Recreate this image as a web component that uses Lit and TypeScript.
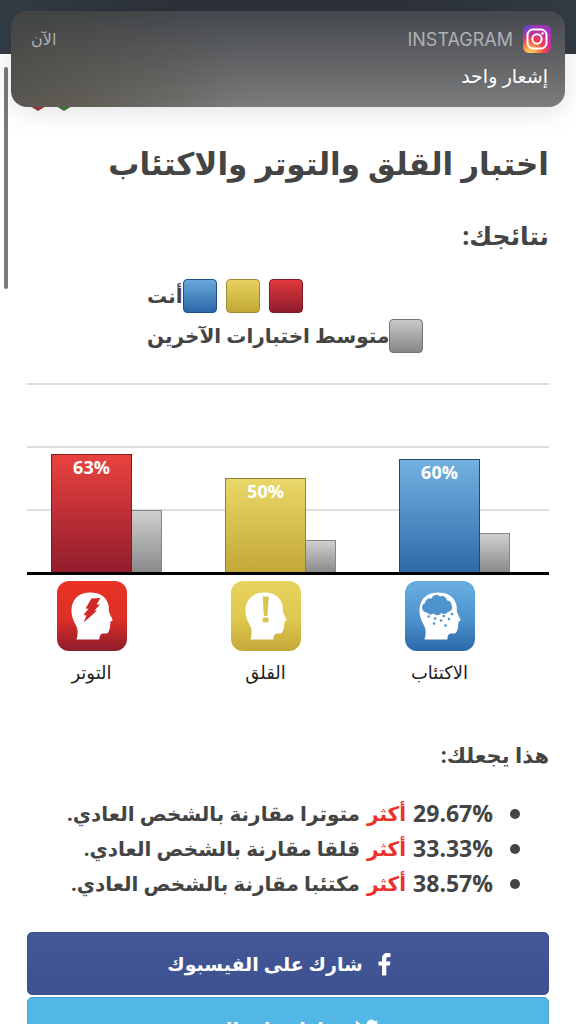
import { LitElement, html, css, svg } from "lit";
import { customElement, property } from "lit/decorators.js";
import { classMap } from "lit/directives/class-map.js";

type Tone = "red" | "yellow" | "blue";

interface Score {
  tone: Tone;
  label: string;
  value: number;
  average: number;
}

interface Finding {
  percent: string;
  text: string;
}

const SCORES: Score[] = [
  { tone: "red", label: "التوتر", value: 63, average: 33 },
  { tone: "yellow", label: "القلق", value: 50, average: 17 },
  { tone: "blue", label: "الاكتئاب", value: 60, average: 21 },
];

const FINDINGS: Finding[] = [
  { percent: "29.67%", text: "متوترا مقارنة بالشخص العادي." },
  { percent: "33.33%", text: "قلقا مقارنة بالشخص العادي." },
  { percent: "38.57%", text: "مكتئبا مقارنة بالشخص العادي." },
];

@customElement("head-icon")
class HeadIcon extends LitElement {
  @property() tone: Tone = "red";

  static styles = css`
    :host {
      display: block;
    }
    .tile {
      display: block;
      width: 70px;
      height: 70px;
    }
  `;

  private symbol() {
    if (this.tone === "red") {
      return svg`<path fill="#d02a28" d="M34.500 17.500L43.500 17L39.500 23.500L43 23.500L37.500 29.500L40 29.500L33 36L26.500 41.500L29.500 34.500L26.500 34L31.500 27.800L28.500 27.500Z"/>`;
    }
    if (this.tone === "yellow") {
      return svg`<g fill="#dcc44c"><path d="M31.700 15.500h6l-1.200 19.500h-3.600z"/><rect x="31.700" y="36.500" width="5.800" height="4.800" rx="1"/></g>`;
    }
    return svg`<g fill="#4f93cd">
      <path d="M22 31.500a5 5 0 0 1-2-9.500a5 5 0 0 1 6.500-4.500a5 5 0 0 1 8.500-2a5 5 0 0 1 7 4a4.500 4.500 0 0 1 4.500 4.500a4.500 4.500 0 0 1-3.500 7a5 5 0 0 1-6.500 1a5 5 0 0 1-8 .5a5 5 0 0 1-6.500-1z"/>
      <circle cx="23.700" cy="35.500" r="1.300"/><circle cx="30" cy="37.500" r="1.300"/><circle cx="38.700" cy="35" r="1.300"/>
      <circle cx="47" cy="33" r="1.300"/><circle cx="36" cy="39.500" r="1.300"/><circle cx="44" cy="38" r="1.300"/>
      <circle cx="29" cy="42.500" r="1.300"/><circle cx="40.500" cy="44.500" r="1.300"/>
    </g>`;
  }

  render() {
    const stops = {
      red: ["#e83225", "#dd2f27", "#8c1c2c"],
      yellow: ["#e8d35c", "#dec74f", "#c3a838"],
      blue: ["#6aaee0", "#4d92cd", "#2c68a8"],
    }[this.tone];
    return html`<svg class="tile" viewBox="0 0 70 70" aria-hidden="true">
      <defs>
        <linearGradient id="g" x1="0" y1="0" x2="0" y2="1">
          <stop offset="0" stop-color=${stops[0]} />
          <stop offset="0.55" stop-color=${stops[1]} />
          <stop offset="1" stop-color=${stops[2]} />
        </linearGradient>
      </defs>
      <rect width="70" height="70" rx="12" fill="url(#g)" />
      <path
        fill="#fff"
        d="M19.500 58.500C21.300 52 21 48 18.500 43.500C15.500 38 14 33 14.500 27.500C15.500 17 23 11.500 33 11.500C43 11.500 49.500 16 51.500 24C52 27 51.500 29 52 31C53 34 54.500 36 55.500 38.500C55.800 39.800 54.500 40.200 53.300 40.700C53.300 42 53.800 43 53 44.500C53.300 46.500 52.800 47.500 52 49.500C51.300 52.800 49.500 52.500 47 52.500C44 52.300 42.800 53.500 42.300 58.500Z"
      />
      ${this.symbol()}
    </svg>`;
  }
}

@customElement("push-banner")
class PushBanner extends LitElement {
  static styles = css`
    :host {
      display: block;
      box-sizing: border-box;
      height: 96px;
      padding: 12px 14px 0 20px;
      border-radius: 16px;
      color: #fff;
      font-family: Inter, "DejaVu Sans", sans-serif;
      font-weight: 400;
      background:
        radial-gradient(ellipse 200px 90px at 60px 100%, rgba(92, 80, 58, 0.3), transparent),
        linear-gradient(90deg, rgba(62, 64, 60, 0.6), transparent 40%),
        linear-gradient(180deg, #45484e, #5d5f62 45%, #7c7c7c);
      box-shadow: 0 4px 28px rgba(0, 0, 0, 0.12);
    }
    .top {
      display: flex;
      align-items: center;
      height: 32px;
      font-size: 18px;
      color: #b0b2b4;
    }
    .logo {
      width: 28px;
      height: 28px;
      margin-left: 10px;
    }
    .time {
      margin-right: auto;
      font-size: 16px;
    }
    .body {
      margin: 8px 3px 0 0;
      font-size: 19px;
      line-height: 28px;
    }
  `;

  render() {
    return html`
      <div class="top">
        <svg class="logo" viewBox="0 0 28 28" aria-hidden="true">
          <defs>
            <radialGradient id="warm" cx="0.25" cy="1.050" r="1.050">
              <stop offset="0" stop-color="#ffd76a" />
              <stop offset="0.25" stop-color="#fba04a" />
              <stop offset="0.5" stop-color="#f0424e" />
              <stop offset="0.75" stop-color="#cc2f92" />
              <stop offset="1" stop-color="#a034b8" />
            </radialGradient>
            <radialGradient id="cool" cx="0" cy="0" r="0.6">
              <stop offset="0" stop-color="#4a55d8" />
              <stop offset="1" stop-color="#7a3cc8" stop-opacity="0" />
            </radialGradient>
          </defs>
          <rect width="28" height="28" rx="6" fill="url(#warm)" />
          <rect width="28" height="28" rx="6" fill="url(#cool)" />
          <g fill="none" stroke="#fff" stroke-width="2">
            <rect x="4.500" y="4.500" width="19" height="19" rx="5.500" />
            <circle cx="14" cy="14" r="4.700" />
          </g>
          <circle cx="19.500" cy="8.500" r="1.300" fill="#fff" />
        </svg>
        <span>INSTAGRAM</span>
        <span class="time">الآن</span>
      </div>
      <p class="body">إشعار واحد</p>
    `;
  }
}

@customElement("score-chart")
class ScoreChart extends LitElement {
  static styles = css`
    :host {
      display: block;
      direction: ltr;
    }
    .plot {
      display: grid;
      grid-template-columns: repeat(3, 1fr);
      height: 189px;
      border-bottom: 3px solid #000;
      background: linear-gradient(#dedede 2px, transparent 2px) 0 0 / 100% 63px;
    }
    .column,
    .caption {
      display: grid;
      grid-template-columns: 24fr 81fr 30fr 39fr;
      align-items: end;
    }
    .captions {
      display: grid;
      grid-template-columns: repeat(3, 1fr);
      padding-top: 6px;
    }
    .bar {
      grid-column: 2;
      box-sizing: border-box;
      border: 1px solid;
      border-bottom: 0;
      text-align: center;
      font: 700 18px/24px "Open Sans", sans-serif;
      color: #fff;
    }
    .red {
      background: linear-gradient(#e9423f, #921d2d);
      border-color: #7c1a28;
    }
    .yellow {
      background: linear-gradient(#ead769, #c3a936);
      border-color: #8f8136;
    }
    .blue {
      background: linear-gradient(#74b0e0, #2e6aa9);
      border-color: #1f4a78;
    }
    .average {
      grid-column: 3;
      box-sizing: border-box;
      border: 1px solid #858585;
      border-left: 0;
      border-bottom: 0;
      background: linear-gradient(#d0cfd0, #8a8a8a);
    }
    .mark {
      grid-column: 2;
      display: flex;
      flex-direction: column;
      align-items: center;
      gap: 8px;
      font: 18px/28px "DejaVu Sans", sans-serif;
      color: #222;
      white-space: nowrap;
    }
  `;

  render() {
    return html`
      <div class="plot">
        ${SCORES.map(
          (s) => html`<div class="column">
            <div class=${classMap({ bar: true, [s.tone]: true })} style="height:${Math.round(s.value * 1.88)}px">
              ${s.value}%
            </div>
            <div class="average" style="height:${Math.round(s.average * 1.88)}px"></div>
          </div>`
        )}
      </div>
      <div class="captions">
        ${SCORES.map(
          (s) => html`<div class="caption">
            <div class="mark">
              <head-icon .tone=${s.tone}></head-icon>
              <span>${s.label}</span>
            </div>
          </div>`
        )}
      </div>
    `;
  }
}

@customElement("app-root")
class AppRoot extends LitElement {
  static styles = css`
    :host {
      display: block;
      position: relative;
      direction: rtl;
      height: 100vh;
      overflow: hidden;
      background: #fff;
      color: #444;
      font-family: "Open Sans", "DejaVu Sans", sans-serif;
      font-weight: 700;
    }
    .banner {
      position: absolute;
      top: 11px;
      left: 11px;
      right: 11px;
    }
    .scroll {
      position: absolute;
      top: 67px;
      left: 4px;
      width: 4px;
      height: 222px;
      border-radius: 2px;
      background: #7a7a7a;
    }
    .header {
      height: 54px;
      background: linear-gradient(90deg, #343d45, #2d323c 30%, #2d323c 70%, #333c45);
    }
    .page {
      padding: 0 27px;
    }
    .brand {
      display: flex;
      justify-content: flex-end;
      height: 58px;
    }
    .emblem {
      width: 54px;
      height: 58px;
    }
    h1 {
      margin: 27px 0 0;
      font-size: 31px;
      line-height: 48px;
      white-space: nowrap;
    }
    h2 {
      margin: 32px 0 0;
      font-size: 25px;
      line-height: 32px;
    }
    .legend {
      display: grid;
      gap: 6px;
      margin: 28px 0 0;
      padding-left: 23%;
      direction: ltr;
      font-size: 20px;
      line-height: 34px;
    }
    .key {
      display: flex;
      align-items: center;
      white-space: nowrap;
    }
    .swatches {
      display: flex;
      gap: 9px;
    }
    .swatch {
      box-sizing: border-box;
      width: 34px;
      height: 34px;
      border: 1px solid;
      border-radius: 4px;
    }
    .red {
      background: linear-gradient(#e0393c, #8f1c2c);
      border-color: #7f1b29;
    }
    .yellow {
      background: linear-gradient(#e6d25f, #c2a935);
      border-color: #a08d36;
    }
    .blue {
      background: linear-gradient(#69a8dc, #2c68a8);
      border-color: #1f4e80;
    }
    .gray {
      background: linear-gradient(#c9c8c9, #868686);
      border-color: #747474;
    }
    .chart {
      margin-top: 30px;
    }
    .lead {
      margin: 52px 0 0;
      font-size: 21px;
      line-height: 32px;
    }
    .findings {
      margin: 25px 0 0;
      padding: 0 29px 0 0;
      font-size: 20px;
      line-height: 35px;
      white-space: nowrap;
      list-style: none;
    }
    .finding {
      display: flex;
      align-items: center;
      gap: 7px;
    }
    .finding::before {
      content: "";
      width: 10px;
      height: 10px;
      margin-left: 10px;
      border-radius: 50%;
      background: #444;
    }
    .percent {
      font-size: 23px;
    }
    .more {
      color: #e8322b;
    }
    .share {
      display: grid;
      gap: 2px;
      margin-top: 31px;
    }
    .button {
      display: flex;
      align-items: center;
      justify-content: center;
      gap: 15px;
      height: 63px;
      padding: 0 18px 0 0;
      border: 1px solid #3b4f8b;
      border-radius: 5px;
      background: linear-gradient(#435798, #3e5190);
      color: #fff;
      font: inherit;
      font-size: 19px;
    }
    .twitter {
      gap: 12px;
      border-color: #4aa5d3;
      background: #53b7e5;
    }
    .glyph {
      width: 13px;
      height: 24px;
      fill: #fff;
    }
    .bird {
      width: 24px;
      height: 24px;
      fill: #fff;
    }
  `;

  render() {
    return html`
      <header class="header"></header>
      <main class="page">
        <div class="brand">
          <svg class="emblem" viewBox="0 0 54 58" aria-hidden="true">
            <path fill="#a33540" d="M-2 46L11 35L24 46V49L11 57L-2 49Z" />
            <path fill="#417a38" d="M24 46L37 35L50 46V49L37 57L24 49Z" />
          </svg>
        </div>
        <h1>اختبار القلق والتوتر والاكتئاب</h1>
        <h2>نتائجك:</h2>
        <div class="legend">
          <div class="key">
            <span>أنت</span>
            <div class="swatches">
              <span class="swatch blue"></span>
              <span class="swatch yellow"></span>
              <span class="swatch red"></span>
            </div>
          </div>
          <div class="key">
            <span dir="rtl">متوسط اختبارات الآخرين</span>
            <span class="swatch gray"></span>
          </div>
        </div>
        <score-chart class="chart"></score-chart>
        <p class="lead">هذا يجعلك:</p>
        <ul class="findings">
          ${FINDINGS.map(
            (f) => html`<li class="finding">
              <span class="percent" dir="ltr">${f.percent}</span>
              <span class="more">أكثر</span>
              <span>${f.text}</span>
            </li>`
          )}
        </ul>
        <div class="share">
          <button class="button" type="button">
            <svg class="glyph" viewBox="0 0 13 24" aria-hidden="true">
              <path d="M12.500 1.200V5H10.200C8.600 5 8.300 5.800 8.300 6.900V9.600H12.400L11.900 13.500H8.300V23.500H4V13.500H0.500V9.600H4V6.500C4 3 6.100 1 9.400 1C10.900 1 12.100 1.100 12.500 1.200Z" />
            </svg>
            <span>شارك على الفيسبوك</span>
          </button>
          <button class="button twitter" type="button">
            <svg class="bird" viewBox="0 0 24 24" aria-hidden="true">
              <path d="M23.600 4.900a9.700 9.700 0 0 1-2.800.8a4.900 4.900 0 0 0 2.100-2.700a9.700 9.700 0 0 1-3.100 1.200a4.850 4.850 0 0 0-8.300 4.400A13.800 13.800 0 0 1 1.500 3.500a4.850 4.850 0 0 0 1.500 6.500a4.800 4.800 0 0 1-2.200-.6a4.900 4.900 0 0 0 3.900 4.800a4.900 4.900 0 0 1-2.200.1a4.900 4.900 0 0 0 4.500 3.400A9.800 9.800 0 0 1 0 19.700a13.800 13.800 0 0 0 7.400 2.200c9 0 14.200-7.600 13.800-14.400a9.900 9.900 0 0 0 2.400-2.600z" />
            </svg>
            <span>شارك على التويتر</span>
          </button>
        </div>
      </main>
      <div class="scroll"></div>
      <push-banner class="banner"></push-banner>
    `;
  }
}
